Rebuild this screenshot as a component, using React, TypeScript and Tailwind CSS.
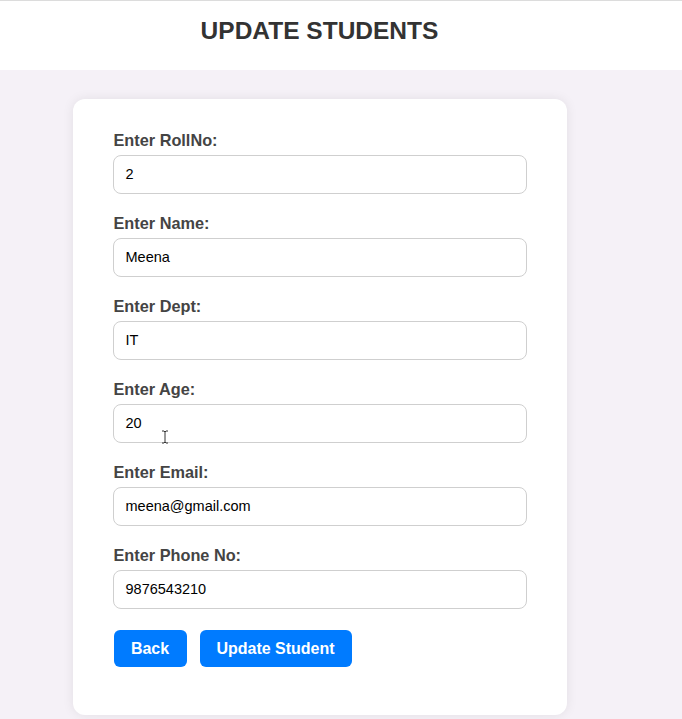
import React from "react";

const fields = [
  { label: "Enter RollNo:", value: "2" },
  { label: "Enter Name:", value: "Meena" },
  { label: "Enter Dept:", value: "IT" },
  { label: "Enter Age:", value: "20" },
  { label: "Enter Email:", value: "meena@gmail.com" },
  { label: "Enter Phone No:", value: "9876543210" },
];

export default function App() {
  return (
    <div
      className="min-h-[719px] bg-[#f5f1f7] relative"
      style={{ fontFamily: '"Liberation Sans", Arial, sans-serif' }}
    >
      <header className="bg-white border-t border-[#dcdcdc] h-[70px]">
        <div className="w-[639px] text-center">
          <h1 className="pt-[16px] text-[24.5px] leading-[28px] font-bold text-[#333]">
            UPDATE STUDENTS
          </h1>
        </div>
      </header>
      <div className="w-[639px] pt-[29px]">
        <div className="mx-auto w-[494px] bg-white rounded-[12px] shadow-[0_0_12px_rgba(0,0,0,0.08)] px-[40px] pt-[32px] pb-[48px]">
          {fields.map((f) => (
            <div key={f.label} className="mb-[20px]">
              <label className="block pl-[1px] text-[16.3px] leading-[18px] font-bold text-[#444] mb-[6px]">
                {f.label}
              </label>
              <div className="h-[39px] border border-[#cfcfcf] rounded-[8px] px-[12px] flex items-center text-[14.5px] text-black">
                {f.value}
              </div>
            </div>
          ))}
          <div className="flex gap-[13px] pl-[1px] pt-[1px]">
            <button className="h-[37px] w-[73px] bg-[#007bff] text-white font-bold text-[16px] rounded-[6px]">
              Back
            </button>
            <button className="h-[37px] w-[152px] bg-[#007bff] text-white font-bold text-[16px] rounded-[6px]">
              Update Student
            </button>
          </div>
        </div>
      </div>
      <svg
        className="absolute left-[161px] top-[430px]"
        width="8"
        height="14"
        viewBox="0 0 8 14"
      >
        <path d="M1 1h2l1 1 1-1h2M4 2v10M1 13h2l1-1 1 1h2" stroke="#333" strokeWidth="1" fill="none" />
      </svg>
    </div>
  );
}
